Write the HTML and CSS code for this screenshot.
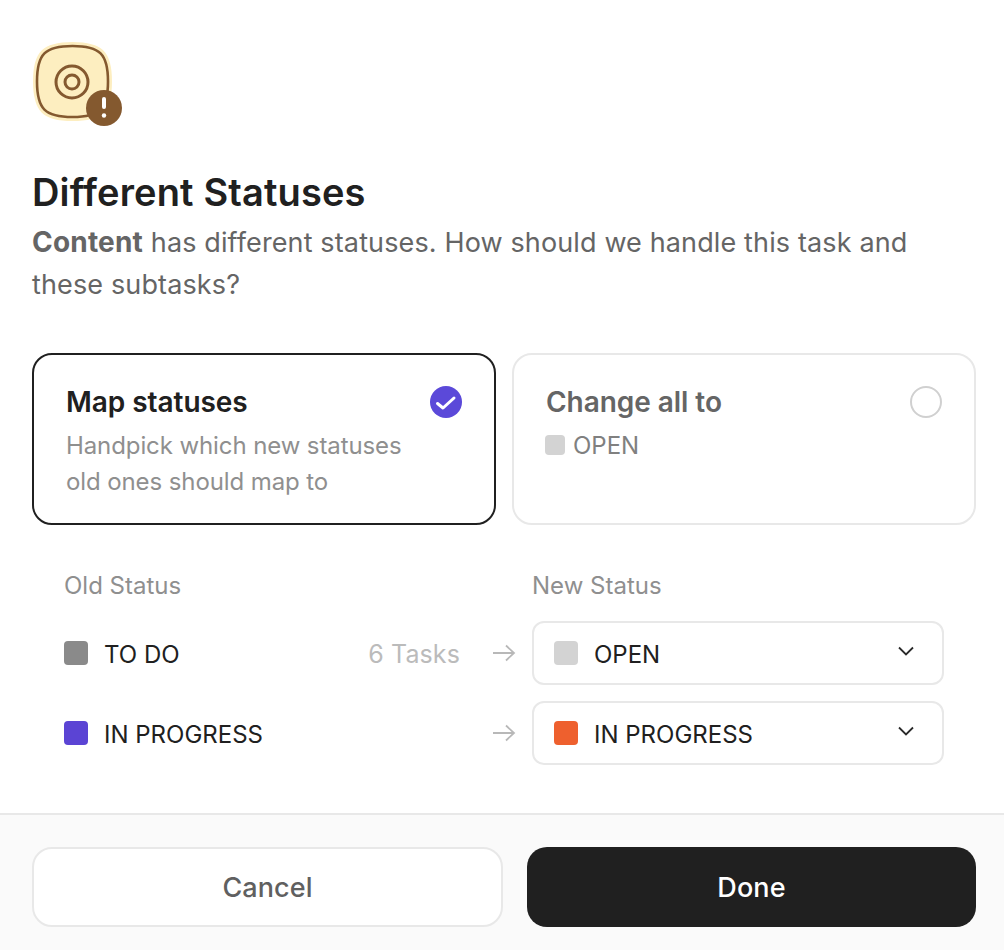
FILE: index.html
```html
<!DOCTYPE html>
<html lang="en">
<head>
<meta charset="utf-8">
<title>Different Statuses</title>
<link rel="stylesheet" href="styles.css">
</head>
<body>
<div class="dialog">
  <main class="content">
    <div class="hero">
      <svg width="92" height="88" viewBox="0 0 92 88">
        <path d="M40.500 6C68 6 76 14 76 41.500S68 77 40.500 77 5 69 5 41.500 13 6 40.500 6Z" fill="#fdeec0" stroke="#fdeec0" stroke-width="8" stroke-linejoin="round"/>
        <path d="M40.500 6C68 6 76 14 76 41.500S68 77 40.500 77 5 69 5 41.500 13 6 40.500 6Z" fill="none" stroke="#84592f" stroke-width="2.600"/>
        <circle cx="40" cy="42" r="16" fill="none" stroke="#84592f" stroke-width="3"/>
        <circle cx="40" cy="42" r="7" fill="none" stroke="#84592f" stroke-width="3"/>
        <circle cx="72" cy="68" r="18" fill="#84592f"/>
        <rect x="70" y="57" width="4" height="12" rx="2" fill="#fff"/>
        <circle cx="72" cy="75.500" r="2.200" fill="#fff"/>
      </svg>
    </div>
    <h1 class="title">Different Statuses</h1>
    <p class="desc"><strong>Content</strong> has different statuses. How should we handle this task and these subtasks?</p>
    <div class="options">
      <div class="option option-active">
        <div class="option-head">
          <span class="option-title">Map statuses</span>
          <svg class="mark" width="32" height="32" viewBox="0 0 32 32"><circle cx="16" cy="16" r="16" fill="#5b49d9"/><path d="M7.500 17.500l5.500 4.500L24 12" fill="none" stroke="#fff" stroke-width="3" stroke-linecap="round" stroke-linejoin="round"/></svg>
        </div>
        <p class="option-text">Handpick which new statuses old ones should map to</p>
      </div>
      <div class="option">
        <div class="option-head">
          <span class="option-title muted">Change all to</span>
          <span class="radio"></span>
        </div>
        <div class="open-tag"><span class="tag-square"></span>OPEN</div>
      </div>
    </div>
    <div class="map-head">
      <span class="map-old">Old Status</span>
      <span class="map-new">New Status</span>
    </div>
    <div class="map-row">
      <div class="old"><span class="square sq-grey"></span><span class="cell-text">TO DO</span></div>
      <span class="count cell-text">6 Tasks</span>
      <svg class="arrow" width="24" height="20" viewBox="0 0 24 20"><path d="M1 10h21M14 2.500 22 10l-8 7.500" fill="none" stroke="#b8b8b8" stroke-width="1.800"/></svg>
      <div class="select"><span class="square sq-light"></span><span class="select-label cell-text">OPEN</span><svg class="chev" width="16" height="10" viewBox="0 0 16 10"><path d="M1 1.500 8 8.500 15 1.500" fill="none" stroke="#2a2a2a" stroke-width="1.800"/></svg></div>
    </div>
    <div class="map-row">
      <div class="old"><span class="square sq-purple"></span><span class="cell-text">IN PROGRESS</span></div>
      <span class="count"></span>
      <svg class="arrow" width="24" height="20" viewBox="0 0 24 20"><path d="M1 10h21M14 2.500 22 10l-8 7.500" fill="none" stroke="#b8b8b8" stroke-width="1.800"/></svg>
      <div class="select"><span class="square sq-orange"></span><span class="select-label cell-text">IN PROGRESS</span><svg class="chev" width="16" height="10" viewBox="0 0 16 10"><path d="M1 1.500 8 8.500 15 1.500" fill="none" stroke="#2a2a2a" stroke-width="1.800"/></svg></div>
    </div>
  </main>
  <footer class="footer">
    <button class="btn btn-cancel">Cancel</button>
    <button class="btn btn-done">Done</button>
  </footer>
</div>
</body>
</html>
```
FILE: styles.css
```css
* { box-sizing: border-box; }
html, body { margin: 0; padding: 0; }
body { background: #fff; font-family: Inter, "Liberation Sans", sans-serif; color: #202020; }
.dialog { width: 1004px; height: 950px; display: flex; flex-direction: column; overflow: hidden; }
.content { height: 813px; padding: 40px 28px 0 32px; }
.hero { height: 88px; }
.hero svg { display: block; }
.title { margin: 42px 0 0; font-size: 38px; line-height: 44px; font-weight: 600; letter-spacing: 0.15px; }
.desc { margin: 8px 0 0; font-size: 27px; line-height: 42px; color: #656565; width: 900px; letter-spacing: 0.13px; }
.desc strong { font-weight: 700; font-size: 28px; line-height: 1; letter-spacing: 0.2px; }
.options { display: grid; grid-template-columns: 464px 464px; gap: 16px; margin-top: 47px; }
.option { height: 172px; border: 2px solid #e8e8e8; border-radius: 20px; padding: 30px 32px 0; }
.option-active { border-color: #202020; }
.option-head { display: flex; justify-content: space-between; align-items: center; height: 34px; }
.option-title { font-size: 28px; font-weight: 600; line-height: 34px; letter-spacing: -0.05px; }
.muted { color: #656565; }
.radio { width: 32px; height: 32px; border-radius: 50%; border: 2px solid #d0d0d0; }
.option-text { margin: 9px 0 0; font-size: 24px; line-height: 36px; color: #8f8f8f; width: 350px; letter-spacing: -0.1px; }
.open-tag { display: flex; align-items: center; gap: 8px; margin-top: 9px; font-size: 24px; line-height: 36px; color: #808080; }
.tag-square { width: 20px; height: 20px; border-radius: 4px; background: #d3d3d3; margin: 0 0 2px -1px; }
.map-head { display: flex; margin-top: 43px; padding-left: 32px; font-size: 24px; line-height: 36px; color: #8f8f8f; }
.map-old { width: 468px; }
.map-row { display: flex; align-items: center; height: 64px; padding-left: 32px; margin-bottom: 16px; font-size: 24px; }
.map-head + .map-row { margin-top: 17px; }
.old { display: flex; align-items: center; gap: 16px; width: 280px; }
.cell-text { padding-top: 2px; }
.square { width: 24px; height: 24px; border-radius: 4px; flex: none; }
.sq-grey { background: #8a8a8a; }
.sq-light { background: #d3d3d3; }
.sq-purple { background: #5b44d4; }
.sq-orange { background: #ee602e; }
.count { width: 116px; margin-right: 20px; text-align: right; color: #bbb; white-space: nowrap; flex: none; font-size: 25px; letter-spacing: 0.1px; }
.arrow { flex: none; margin-left: 12px; margin-right: 16px; }
.select { display: flex; align-items: center; width: 412px; height: 64px; border: 2px solid #e8e8e8; border-radius: 12px; padding: 0 28px 0 20px; }
.select-label { margin-left: 16px; flex: 1; }
.chev { margin-bottom: 4px; }
.footer { flex: 1; display: flex; gap: 24px; padding: 32px 28px 0 32px; background: #fafafa; border-top: 2px solid #e8e8e8; }
.btn { height: 80px; border-radius: 20px; font-family: inherit; font-size: 27px; font-weight: 450; letter-spacing: 0.1px; }
.btn-cancel { width: 471px; background: #fff; border: 2px solid #e8e8e8; color: #606060; }
.btn-done { width: 449px; background: #202020; border: none; color: #fff; }
```
